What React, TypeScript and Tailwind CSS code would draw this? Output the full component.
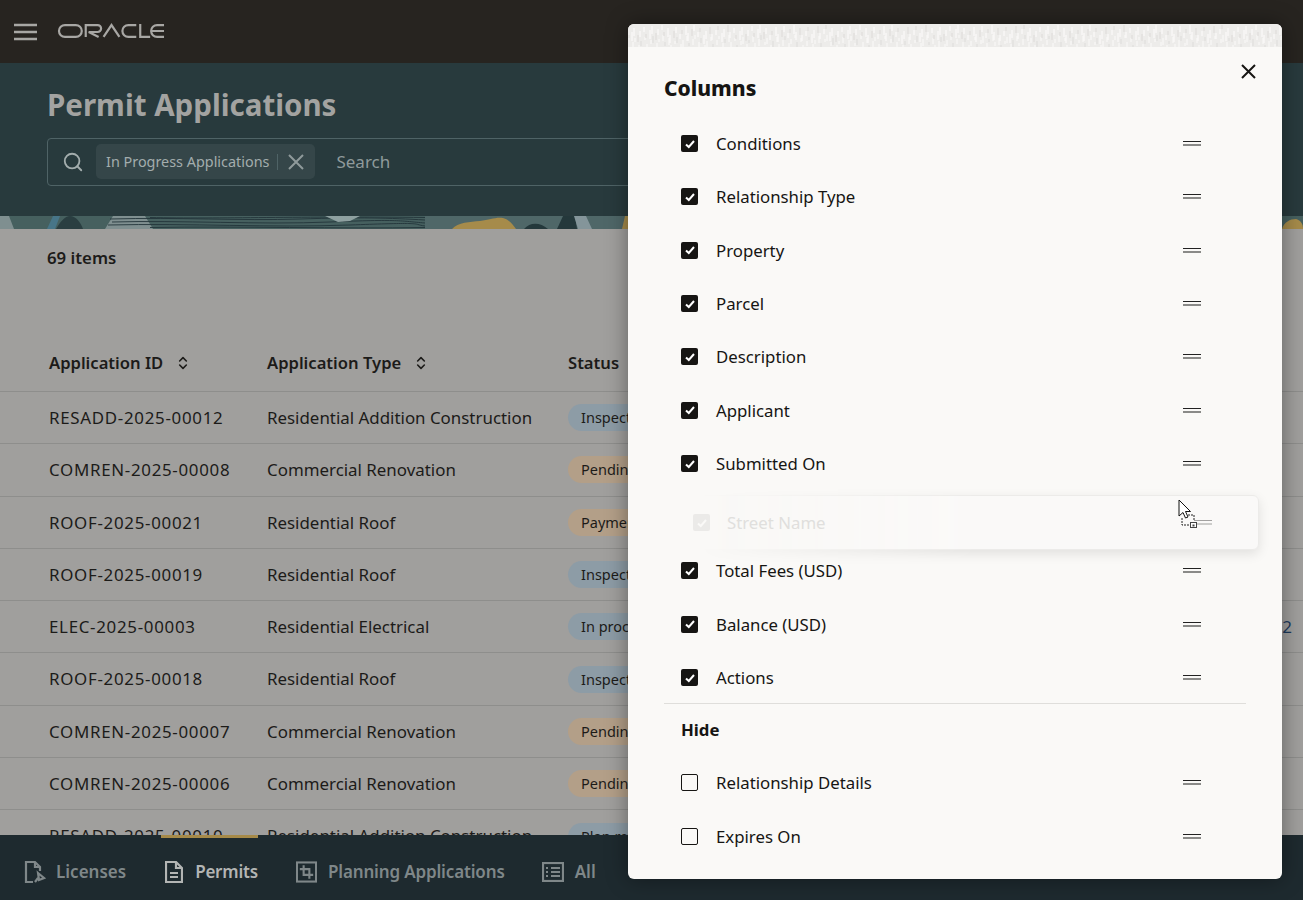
import { Search, ChevronsUpDown } from "lucide-react";

const rows = [
  { id: "RESADD-2025-00012", type: "Residential Addition Construction", status: "Inspections", tone: "blue" },
  { id: "COMREN-2025-00008", type: "Commercial Renovation", status: "Pending", tone: "tan" },
  { id: "ROOF-2025-00021", type: "Residential Roof", status: "Payment", tone: "tan" },
  { id: "ROOF-2025-00019", type: "Residential Roof", status: "Inspections", tone: "blue" },
  { id: "ELEC-2025-00003", type: "Residential Electrical", status: "In process", tone: "blue" },
  { id: "ROOF-2025-00018", type: "Residential Roof", status: "Inspections", tone: "blue" },
  { id: "COMREN-2025-00007", type: "Commercial Renovation", status: "Pending", tone: "tan" },
  { id: "COMREN-2025-00006", type: "Commercial Renovation", status: "Pending", tone: "tan" },
  { id: "RESADD-2025-00010", type: "Residential Addition Construction", status: "Plan review", tone: "blue" },
];

const shown = ["Conditions", "Relationship Type", "Property", "Parcel", "Description", "Applicant", "Submitted On"];
const shown2 = ["Total Fees (USD)", "Balance (USD)", "Actions"];
const hidden = ["Relationship Details", "Expires On"];

function Handle() {
  return (
    <div className="flex flex-col gap-[2px] w-[18px]">
      <div className="h-px bg-[#222]" />
      <div className="h-[2px] bg-[#8a8a88]" />
    </div>
  );
}

function ColRow({ label, checked }: { label: string; checked: boolean }) {
  return (
    <div className="h-[53.33px] flex items-center pl-[17px] pr-[45px] text-[16.8px] text-[#161513]">
      {checked ? (
        <div className="w-[17px] h-[17px] rounded-[2px] bg-[#161513] flex items-center justify-center">
          <svg width="12" height="12" viewBox="0 0 12 12" fill="none" stroke="#fff" strokeWidth="2">
            <path d="M2 6.4 4.8 9 10 3" />
          </svg>
        </div>
      ) : (
        <div className="w-[17px] h-[17px] rounded-[2px] border-[1.5px] border-[#161513]" />
      )}
      <span className="ml-[18px]">{label}</span>
      <div className="ml-auto"><Handle /></div>
    </div>
  );
}

function Band() {
  return (
    <svg className="block w-full h-[13px]" viewBox="0 0 1303 13" preserveAspectRatio="none">
      <rect width="1303" height="13" fill="#46605f" />
      <path d="M0 0H9L14 13H0Z" fill="#7f8f90" />
      <path d="M47 13 53 0H60L55 13Z" fill="#477588" />
      <path d="M56 13C60 6 65 0 70 0 76 0 81 7 83 13Z" fill="#2a3e41" />
      <path d="M105 13 113 0H145L153 13Z" fill="#7f8f90" />
      <path d="M110 3C180 1 240 5 300 3S390 2 425 4M112 6C180 4 260 9 330 6S400 5 425 7M108 9C190 7 270 12 350 9S410 8 425 10M150 1.5C220 3 300 0 425 1.5M150 11.5C240 10 340 13 425 11.5" stroke="#22343a" strokeWidth="0.9" fill="none" />
      <path d="M325 0H360L350 5 338 6Z" fill="#8ea0a0" />
      <path d="M425 0H640V13H425Z" fill="#4f6768" />
      <path d="M452 13C458 6 470 6 480 5 490 4 495 1 503 2 510 4 513 9 516 13Z" fill="#a68b4a" />
      <path d="M524 13C530 6 540 6 548 13Z" fill="#24383b" />
      <path d="M557 13 563 0H575L577 13Z" fill="#24383b" />
      <path d="M574 0H586L592 13H578Z" fill="#84959a" />
      <path d="M622 13 625 0H640V13Z" fill="#a68b4a" />
      <path d="M1282 13C1284 6 1290 3 1296 3 1300 4 1303 7 1303 13Z" fill="#a68b4a" />
    </svg>
  );
}

// strip of small pale dashes along the top of the drawer
function Texture() {
  const marks = [];
  for (let i = 0; i < 218; i++) {
    const x = i * 3 + (i % 2);
    const y = (i * 7) % 11;
    marks.push(<path key={i} d={`M${x} ${y + 1}v${4 + (i * 5) % 6}`} stroke={i % 3 === 0 ? "#dfdedb" : "#fbfaf8"} strokeWidth="1.2" />);
    marks.push(<path key={"b" + i} d={`M${x + 1} ${y + 11}v${3 + (i * 3) % 5}`} stroke={i % 4 === 0 ? "#e0dfdc" : "#f9f8f6"} strokeWidth="1.2" />);
  }
  return (
    <svg className="block w-full h-[23px]" viewBox="0 0 654 23">
      <rect width="654" height="23" fill="#edecea" />
      {marks}
    </svg>
  );
}

export default function App() {
  return (
    <div className="relative w-[1303px] h-[900px] overflow-hidden flex flex-col bg-[#a09f9d] font-['Noto_Sans',sans-serif] text-[#1c1b19]">
      <header className="h-[63px] shrink-0 bg-[#272420] flex items-center pl-[14px]">
        <svg width="23" height="18" viewBox="0 0 23 18" stroke="#a8a7a4" strokeWidth="2.4">
          <path d="M0 2H23M0 9H23M0 16H23" />
        </svg>
        <svg className="ml-[20px] -mt-px" width="109" height="18" viewBox="0 0 110 18" fill="none" stroke="#a8a7a4" strokeWidth="2.2">
          <rect x="2" y="3" width="23" height="12" rx="6" />
          <path d="M29 15 V3 H41 a3.4 3.4 0 0 1 0 7 H32 L42 15" />
          <path d="M47 15 55 3 63 15" />
          <path d="M80 3H72a6 6 0 0 0 0 12H80" />
          <path d="M84 2V15H94" />
          <path d="M108 3H101a6 6 0 0 0 0 12H108M96 9H108" />
        </svg>
      </header>

      <section className="h-[166px] shrink-0 bg-[#283a3d] flex flex-col">
        <div className="flex-1 pl-[47px] pt-[23px]">
          <h1 className="text-[29.5px] leading-[38px] font-bold text-[#a3a3a1]">Permit Applications</h1>
          <div className="mt-[14px] h-[48px] w-[700px] rounded-[4px] border border-[#4f6366] flex items-center pl-[14px]">
            <Search className="w-[22px] h-[22px] text-[#a3adad]" strokeWidth={2} />
            <div className="ml-[12px] h-[35px] mb-px rounded-[5px] bg-[#354649] flex items-center pl-[10px] pr-[11px] text-[14.4px] text-[#a3adad]">
              In Progress Applications
              <span className="ml-[8px] h-[16px] w-px bg-[#4f6366]" />
              <svg className="ml-[10px]" width="16" height="16" viewBox="0 0 16 16" stroke="#8f9a9b" strokeWidth="2">
                <path d="M1 1 15 15M15 1 1 15" />
              </svg>
            </div>
            <span className="ml-[21px] mb-px text-[17px] text-[#8f9a9b]">Search</span>
          </div>
        </div>
        <Band />
      </section>

      <main className="flex-1 min-h-0 overflow-hidden">
        <div className="pl-[47px] pt-[16px] h-[103px] text-[16.8px] font-semibold text-[#1c1b19]">69 items</div>
        <div className="grid grid-cols-[218px_301px_1fr] pl-[49px] pt-[4px] h-[60px] items-center text-[16.6px] font-semibold border-b border-[#8e8e8c]">
          <div className="flex items-center gap-[12px]">Application ID <ChevronsUpDown className="w-[16px] h-[16px]" strokeWidth={2.4} /></div>
          <div className="flex items-center gap-[12px]">Application Type <ChevronsUpDown className="w-[16px] h-[16px]" strokeWidth={2.4} /></div>
          <div>Status</div>
        </div>
        {rows.map((r) => (
          <div key={r.id} className="grid grid-cols-[218px_301px_1fr] pl-[49px] h-[52.3px] items-center text-[16.9px] border-b border-[#8e8e8c]">
            <div className="tracking-[0.7px]">{r.id}</div>
            <div>{r.type}</div>
            <div>
              <span className={"inline-block h-[27px] leading-[27px] pl-[13px] pr-[13px] rounded-full text-[14.5px] whitespace-nowrap " + (r.tone === "blue" ? "bg-[#8d9ca6]" : "bg-[#b39f88]")}>{r.status}</span>
            </div>
          </div>
        ))}
      </main>

      <nav className="h-[65px] shrink-0 bg-[#1e2a2f] flex items-center pl-[24px] text-[17px] font-semibold text-[#7f8789]">
        <div className="flex items-center gap-[10px] pt-[8px]">
          <svg width="22" height="24" viewBox="0 0 22 24" fill="none" stroke="currentColor" strokeWidth="2.2"><path d="M9 22H2V2H11L16 7V11" /><path d="M11 2V7H16" /><path d="M14 13 20 18 15 20ZM14 18 11 22" /></svg>
          Licenses
        </div>
        <div className="relative ml-[35px] pl-[4px] flex items-center gap-[12px] text-[#b3b5b4] h-full pt-[8px] tracking-[-0.2px]">
          <div className="absolute top-0 left-0 right-0 h-[3px] bg-[#a68a49]" />
          <svg width="18" height="22" viewBox="0 0 18 22" fill="none" stroke="currentColor" strokeWidth="2.2"><path d="M1 1H11L17 7V21H1Z" /><path d="M11 1V7H17M5 12H13M5 16H13" /></svg>
          Permits
        </div>
        <div className="ml-[38px] flex items-center gap-[11px] pt-[8px] tracking-[-0.15px]">
          <svg width="21" height="22" viewBox="0 0 22 22" fill="none" stroke="currentColor" strokeWidth="2.2"><rect x="1" y="1" width="20" height="20" /><path d="M8 4V14H18M4 8H14V18" /></svg>
          Planning Applications
        </div>
        <div className="ml-[37px] flex items-center gap-[11px] pt-[8px]">
          <svg width="22" height="20" viewBox="0 0 22 20" fill="none" stroke="currentColor" strokeWidth="2.2"><rect x="1" y="1" width="20" height="18" /><path d="M4 6H6M9 6H18M4 10H6M9 10H18M4 14H6M9 14H18" /></svg>
          All
        </div>
      </nav>

      <div className="absolute right-[11px] top-[614px] text-[17px] text-[#1d3a5c]">2</div>

      {/* drawer */}
      <div className="absolute left-[628px] top-[24px] w-[654px] h-[855px] rounded-[6px] bg-[#faf9f7] shadow-[0_0_22px_rgba(0,0,0,0.4)] overflow-hidden">
        <Texture />
        <div className="relative pl-[36px] pr-[36px]">
          <h2 className="pt-[27px] h-[70px] text-[21px] leading-[28px] font-extrabold text-[#161513]">Columns</h2>
          <button className="absolute right-[26px] top-[17px]">
            <svg className="block" width="15" height="15" viewBox="0 0 15 15" stroke="#161513" strokeWidth="2">
              <path d="M1 1 14 14M14 1 1 14" />
            </svg>
          </button>
          {shown.map((c) => <ColRow key={c} label={c} checked />)}
          <div className="h-[54px]" />
          {shown2.map((c) => <ColRow key={c} label={c} checked />)}
          <div className="-mt-px border-t border-[#dfdedb] pl-[17px] pt-[13px] h-[53px] text-[16.8px] font-bold text-[#161513]">Hide</div>
          {hidden.map((c) => <ColRow key={c} label={c} checked={false} />)}
        </div>

        {/* row being dragged: its edge fades out toward the left */}
        <div className="absolute left-[30px] top-[461px] w-[620px] h-[85px] [mask-image:linear-gradient(to_right,transparent_40px,black_320px)]">
          <div className="absolute left-[18px] top-[10px] right-[19px] h-[55px] rounded-[6px] border border-[#ecebe9] bg-[#faf9f8] shadow-[0_4px_12px_rgba(0,0,0,0.1)]" />
        </div>
        <div className="absolute left-[48px] top-[471px] w-[583px] h-[55px] flex items-center pl-[17px] pr-[47px] text-[16.8px] text-[#e0dfdd]">
          <div className="w-[17px] h-[17px] rounded-[2px] bg-[#ebeae8] flex items-center justify-center">
            <svg width="12" height="12" viewBox="0 0 12 12" fill="none" stroke="#faf9f7" strokeWidth="2"><path d="M2 6.4 4.8 9 10 3" /></svg>
          </div>
          <span className="ml-[17px]">Street Name</span>
          <div className="ml-auto flex flex-col gap-[2px] w-[18px] opacity-40"><div className="h-px bg-[#222]" /><div className="h-[2px] bg-[#8a8a88]" /></div>
        </div>
        <svg className="absolute left-[549px] top-[475px]" width="22" height="30" viewBox="0 0 22 30" fill="none">
          <path d="M2 1V17L6 13.5L8.5 19L11 18L8.5 12.5H13.5Z" fill="#fff" stroke="#111" strokeWidth="1" />
          <path d="M5 19V26H12M11 16H17V22" stroke="#222" strokeDasharray="2 1" />
          <rect x="13.5" y="23.5" width="6" height="5" fill="#fff" stroke="#444" />
          <rect x="15.5" y="25.5" width="2" height="2" fill="#444" />
        </svg>
      </div>
    </div>
  );
}
